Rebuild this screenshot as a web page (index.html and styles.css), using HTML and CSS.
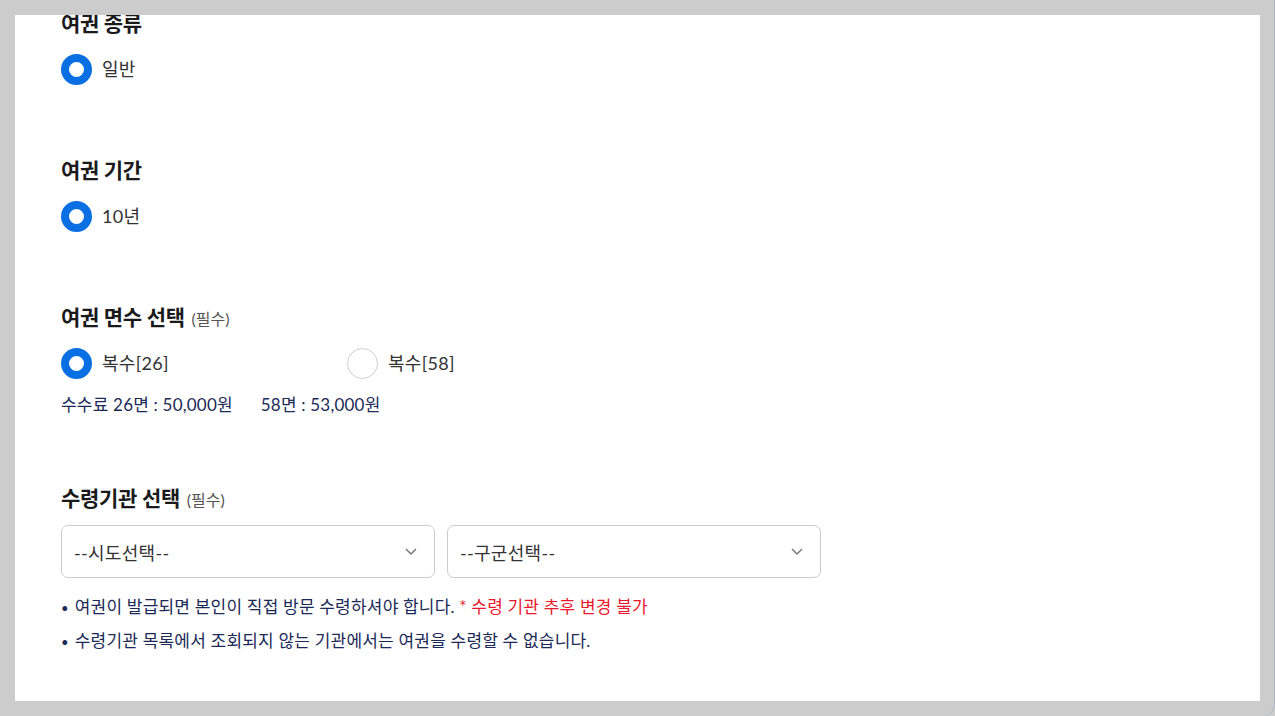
FILE: index.html
```html
<!DOCTYPE html>
<html lang="ko">
<head>
<meta charset="utf-8">
<title>여권 신청</title>
<link rel="stylesheet" href="styles.css">
</head>
<body>
<div class="frame">
  <div class="panel">
    <div class="form">
      <section class="section">
        <h2 class="title">여권 종류</h2>
        <div class="options">
          <label class="option"><span class="radio checked"></span><span class="opt-text">일반</span></label>
        </div>
      </section>

      <section class="section">
        <h2 class="title">여권 기간</h2>
        <div class="options">
          <label class="option"><span class="radio checked"></span><span class="opt-text">10년</span></label>
        </div>
      </section>

      <section class="section fees">
        <h2 class="title">여권 면수 선택 <span class="req">(필수)</span></h2>
        <div class="options">
          <label class="option wide"><span class="radio checked"></span><span class="opt-text">복수[26]</span></label>
          <label class="option"><span class="radio"></span><span class="opt-text">복수[58]</span></label>
        </div>
        <p class="fee"><span>수수료 26면 : 50,000원</span><span class="fee-2">58면 : 53,000원</span></p>
      </section>

      <section class="section last">
        <h2 class="title">수령기관 선택 <span class="req">(필수)</span></h2>
        <div class="selects">
          <div class="select"><span>--시도선택--</span>
            <svg class="chev" width="12" height="7" viewBox="0 0 12 7"><path d="M1 1l5 5 5-5" fill="none" stroke="#7a7a7a" stroke-width="1.5"/></svg>
          </div>
          <div class="select"><span>--구군선택--</span>
            <svg class="chev" width="12" height="7" viewBox="0 0 12 7"><path d="M1 1l5 5 5-5" fill="none" stroke="#7a7a7a" stroke-width="1.5"/></svg>
          </div>
        </div>
        <ul class="notes">
          <li>여권이 발급되면 본인이 직접 방문 수령하셔야 합니다. <span class="warn">* 수령 기관 추후 변경 불가</span></li>
          <li>수령기관 목록에서 조회되지 않는 기관에서는 여권을 수령할 수 없습니다.</li>
        </ul>
      </section>
    </div>
  </div>
</div>
</body>
</html>
```

FILE: styles.css
```css
* { box-sizing: border-box; }
html, body { margin: 0; padding: 0; }
body {
  background: #cccccc;
  font-family: "Lato", "Noto Sans CJK KR", sans-serif;
  color: #333;
}
.frame {
  width: 1275px;
  height: 716px;
  padding: 15px 14px 15px 15px;
  border-right: 1px solid #aab3c6;
  border-bottom-right-radius: 12px;
  overflow: hidden;
}
.panel {
  background: #fff;
  height: 686px;
  overflow: hidden;
  padding-left: 46px;
}
.form { padding-top: 1px; margin-top: -8px; }
.section { margin-bottom: 70px; }
.section.fees { margin-bottom: 66px; }
.section.last { margin-bottom: 0; }
.title {
  margin: 0 0 15px;
  height: 30px;
  font-size: 21px;
  line-height: 30px;
  font-weight: 700;
  color: #1a1a1a;
  letter-spacing: -0.3px;
  white-space: nowrap;
}
.req {
  font-size: 16px;
  line-height: 1;
  font-weight: 400;
  color: #555;
  letter-spacing: 0;
  margin-left: 2px;
}
.options {
  display: flex;
  height: 32px;
  align-items: center;
}
.option {
  display: flex;
  align-items: center;
  gap: 10px;
}
.option.wide { width: 286px; }
.radio {
  width: 31px;
  height: 31px;
  border-radius: 50%;
  border: 1px solid #cfcfcf;
  background: #fff;
  flex: none;
}
.radio.checked { border: 8px solid #0a6fe3; }
.opt-text {
  font-size: 18px;
  line-height: 24px;
  color: #333;
  letter-spacing: 0.3px;
}
.fee {
  margin: 14px 0 0;
  height: 24px;
  font-size: 17px;
  line-height: 24px;
  color: #1b2a57;
  letter-spacing: 0.2px;
}
.fee-2 { margin-left: 28px; }
.section.last .title { margin-bottom: 12px; }
.selects {
  display: flex;
  gap: 12px;
}
.select {
  width: 374px;
  height: 53px;
  border: 1px solid #cccccc;
  border-radius: 7px;
  display: flex;
  align-items: center;
  justify-content: space-between;
  padding: 0 17px 0 12px;
  font-size: 18px;
  color: #333;
  letter-spacing: 0.3px;
}
.chev { flex: none; }
.notes {
  list-style: none;
  margin: 17px 0 0;
  padding: 0;
  font-size: 17px;
  line-height: 24px;
  color: #1b2a57;
  letter-spacing: 0.2px;
}
.notes li { height: 24px; white-space: nowrap; }
.notes li + li { margin-top: 10px; }
.notes li::before {
  content: "•";
  font-size: 13px;
  margin-right: 6px;
}
.warn { color: #e8192c; }
```
